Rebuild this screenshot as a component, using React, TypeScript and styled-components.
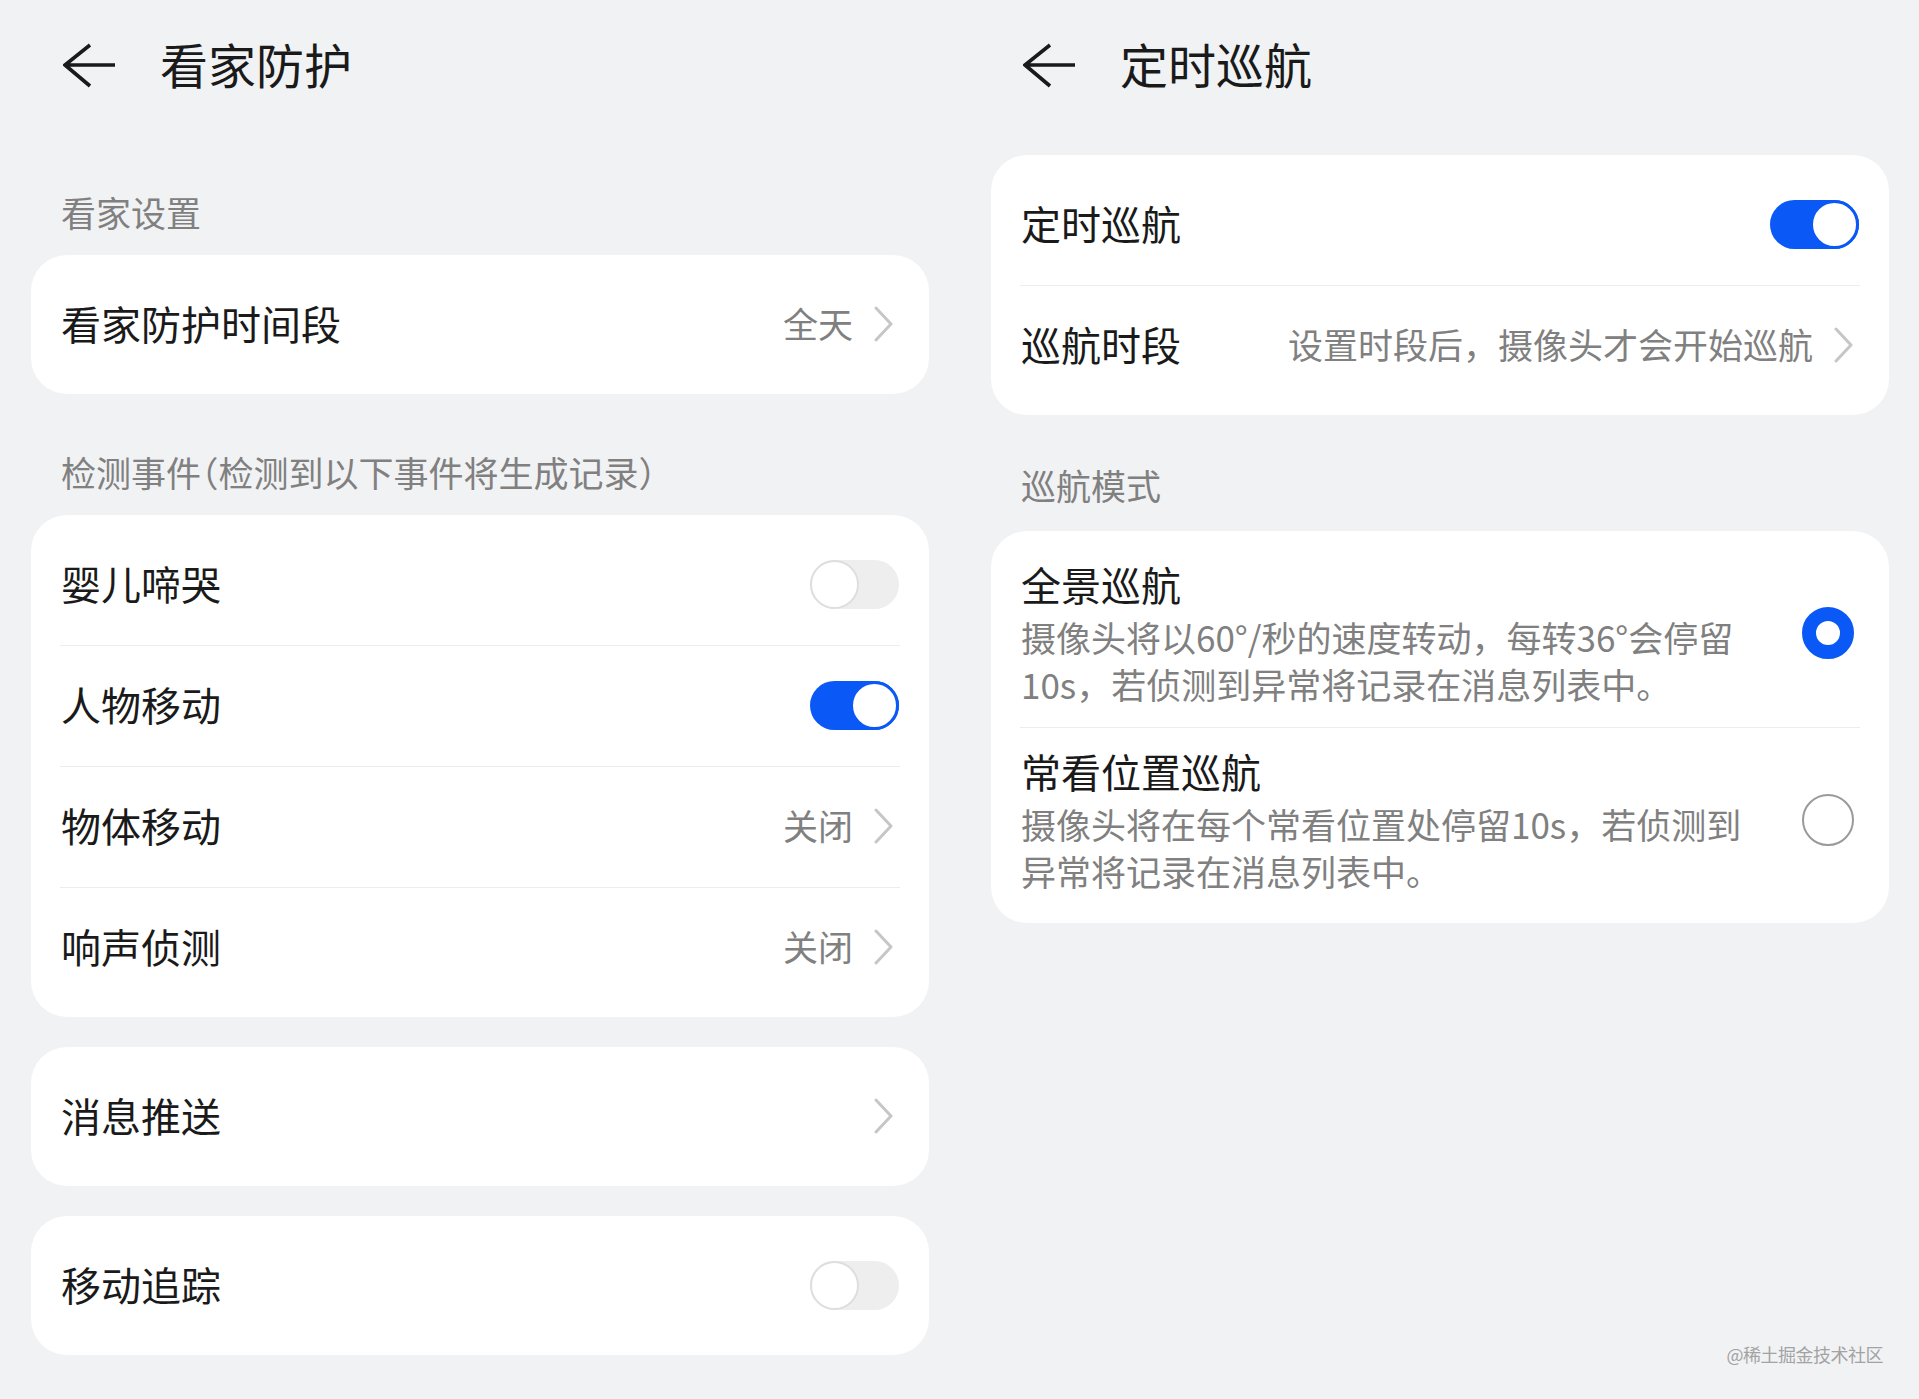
import * as React from 'react'
import styled, { createGlobalStyle } from 'styled-components'

const BLUE = '#0a59f7'
const BG = '#f1f2f4'
const TEXT = '#1a1a1a'
const GREY_TEXT = '#808080'
const DIVIDER = '#ededed'
const FONT = '"Noto Sans CJK SC", "Noto Sans", sans-serif'

const GlobalStyle = createGlobalStyle`
  html, body {
    margin: 0;
    padding: 0;
    background: ${BG};
  }
  body {
    font-family: ${FONT};
    color: ${TEXT};
  }
`

function BackArrow () {
  return (
    <ArrowSvg viewBox='0 0 54 48' width={54} height={48}>
      <path d='M2 24 H52 M27 4 L2 24 L27 45' fill='none' stroke={TEXT} strokeWidth={3.6} strokeLinejoin='miter' />
    </ArrowSvg>
  )
}

function Chevron () {
  return (
    <ChevronSvg viewBox='0 0 28 36' width={28} height={36}>
      <path d='M5 2 L20 18 L5 34' fill='none' stroke='#c6c6c6' strokeWidth={3} strokeLinecap='round' strokeLinejoin='round' />
    </ChevronSvg>
  )
}

interface ToggleProps {
  on?: boolean
}

function Toggle ({ on }: ToggleProps) {
  return (
    <Track $on={on}>
      <Knob $on={on} />
    </Track>
  )
}

interface LinkRowProps {
  label: string
  value?: string
}

function LinkRow ({ label, value }: LinkRowProps) {
  return (
    <Row>
      <Label>{label}</Label>
      <Trailing>
        {value && <Value>{value}</Value>}
        <Chevron />
      </Trailing>
    </Row>
  )
}

function SwitchRow ({ label, on }: { label: string, on?: boolean }) {
  return (
    <Row>
      <Label>{label}</Label>
      <Toggle on={on} />
    </Row>
  )
}

interface ModeRowProps {
  title: string
  lines: string[]
  selected?: boolean
}

function ModeRow ({ title, lines, selected }: ModeRowProps) {
  return (
    <ModeItem>
      <ModeText>
        <ModeTitle>{title}</ModeTitle>
        <ModeDesc>
          {lines.map(line => <DescLine key={line}>{line}</DescLine>)}
        </ModeDesc>
      </ModeText>
      <Radio $selected={selected} />
    </ModeItem>
  )
}

export default function App () {
  return (
    <Page>
      <GlobalStyle />

      <Column>
        <Header>
          <BackArrow />
          <Title>看家防护</Title>
        </Header>

        <SectionLabel $top={54}>看家设置</SectionLabel>
        <Card>
          <LinkRow label='看家防护时间段' value='全天' />
        </Card>

        <SectionLabel $top={54}>检测事件（检测到以下事件将生成记录）</SectionLabel>
        <Card>
          <SwitchRow label='婴儿啼哭' />
          <Divider />
          <SwitchRow label='人物移动' on />
          <Divider />
          <LinkRow label='物体移动' value='关闭' />
          <Divider />
          <LinkRow label='响声侦测' value='关闭' />
        </Card>

        <Spacer />
        <Card>
          <LinkRow label='消息推送' />
        </Card>

        <Spacer />
        <Card>
          <SwitchRow label='移动追踪' />
        </Card>
      </Column>

      <Column>
        <Header>
          <BackArrow />
          <Title>定时巡航</Title>
        </Header>

        <Card style={{ marginTop: 21 }}>
          <SwitchRow label='定时巡航' on />
          <Divider />
          <LinkRow label='巡航时段' value='设置时段后，摄像头才会开始巡航' />
        </Card>

        <SectionLabel $top={46} $bottom={22}>巡航模式</SectionLabel>
        <Card>
          <ModeRow
            title='全景巡航'
            lines={['摄像头将以60°/秒的速度转动，每转36°会停留', '10s，若侦测到异常将记录在消息列表中。']}
            selected
          />
          <Divider />
          <ModeRow
            title='常看位置巡航'
            lines={['摄像头将在每个常看位置处停留10s，若侦测到', '异常将记录在消息列表中。']}
          />
        </Card>
      </Column>

      <Watermark>@稀土掘金技术社区</Watermark>
    </Page>
  )
}

const Page = styled.div`
  position: relative;
  display: flex;
  gap: 62px;
  padding-left: 31px;
  width: 1919px;
  height: 1399px;
  box-sizing: border-box;
  background: ${BG};
`

const Column = styled.div`
  display: flex;
  flex-direction: column;
  width: 898px;
`

const Header = styled.div`
  height: 134px;
  display: flex;
  align-items: center;
  padding-left: 32px;
  gap: 43px;
`

const ArrowSvg = styled.svg`
  display: block;
  flex-shrink: 0;
  margin-top: -4px;
`

const Title = styled.h1`
  margin: 0 0 8px;
  font-size: 48px;
  font-weight: 400;
  line-height: 60px;
  color: ${TEXT};
`

const SectionLabel = styled.div<{ $top: number, $bottom?: number }>`
  padding: ${p => p.$top}px 30px ${p => p.$bottom ?? 19}px;
  font-size: 35px;
  line-height: 48px;
  color: ${GREY_TEXT};
  white-space: nowrap;
  font-feature-settings: "halt";
`

const Card = styled.div`
  background: #ffffff;
  border-radius: 36px;
  padding: 9.5px 0;
`

const Spacer = styled.div`
  height: 30px;
`

const Row = styled.div`
  height: 120px;
  padding: 0 30px;
  display: flex;
  align-items: center;
  justify-content: space-between;
`

const Divider = styled.div`
  height: 1px;
  margin: 0 29px;
  background: ${DIVIDER};
`

const Label = styled.span`
  font-size: 40px;
  line-height: 52px;
  padding-bottom: 4px;
  color: ${TEXT};
`

const Trailing = styled.div`
  display: flex;
  align-items: center;
`

const Value = styled.span`
  font-size: 35px;
  line-height: 48px;
  padding-bottom: 4px;
  color: ${GREY_TEXT};
  margin-right: 18px;
`

const ChevronSvg = styled.svg`
  display: block;
  margin-bottom: 2px;
`

const Track = styled.span<{ $on?: boolean }>`
  display: flex;
  align-items: center;
  justify-content: ${p => (p.$on ? 'flex-end' : 'flex-start')};
  width: 89px;
  height: 49px;
  border-radius: 25px;
  background: ${p => (p.$on ? BLUE : '#eeeeee')};
`

const Knob = styled.span<{ $on?: boolean }>`
  width: 49px;
  height: 49px;
  box-sizing: border-box;
  border-radius: 50%;
  background: #ffffff;
  border: ${p => (p.$on ? `3.5px solid ${BLUE}` : '2px solid #dedede')};
`

const ModeItem = styled.div`
  display: flex;
  align-items: center;
  justify-content: space-between;
  padding: 18px 30px 20px;
`

const ModeText = styled.div`
  display: flex;
  flex-direction: column;
  gap: 4px;
`

const ModeTitle = styled.div`
  font-size: 40px;
  line-height: 50px;
  color: ${TEXT};
`

const ModeDesc = styled.div`
  font-size: 35px;
  line-height: 47px;
  color: ${GREY_TEXT};
`

const DescLine = styled.div`
  white-space: nowrap;
`

const Radio = styled.span<{ $selected?: boolean }>`
  width: 52px;
  height: 52px;
  margin-right: 5px;
  box-sizing: border-box;
  border-radius: 50%;
  background: #ffffff;
  border: ${p => (p.$selected ? `14px solid ${BLUE}` : '2.5px solid #9a9a9a')};
  flex-shrink: 0;
`

const Watermark = styled.div`
  position: absolute;
  right: 36px;
  bottom: 34px;
  font-size: 18px;
  line-height: 22px;
  color: #a3a3a3;
  letter-spacing: -0.5px;
`
